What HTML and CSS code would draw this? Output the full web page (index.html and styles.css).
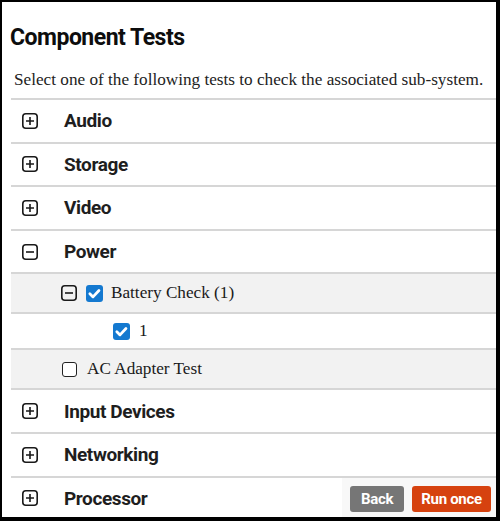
FILE: index.html
```html
<!DOCTYPE html>
<html>
<head>
<meta charset="utf-8">
<link rel="stylesheet" href="styles.css">
</head>
<body>
<div class="frame">
  <h1 class="title">Component Tests</h1>
  <p class="intro">Select one of the following tests to check the associated sub-system.</p>
  <ul class="list">
    <li class="row"><svg class="tog" viewBox="0 0 16 16"><rect x="0.8" y="0.8" width="14.4" height="14.4" rx="3"/><path d="M4 8h8M8 4v8"/></svg><span class="cat">Audio</span></li>
    <li class="row"><svg class="tog" viewBox="0 0 16 16"><rect x="0.8" y="0.8" width="14.4" height="14.4" rx="3"/><path d="M4 8h8M8 4v8"/></svg><span class="cat">Storage</span></li>
    <li class="row"><svg class="tog" viewBox="0 0 16 16"><rect x="0.8" y="0.8" width="14.4" height="14.4" rx="3"/><path d="M4 8h8M8 4v8"/></svg><span class="cat">Video</span></li>
    <li class="row"><svg class="tog" viewBox="0 0 16 16"><rect x="0.8" y="0.8" width="14.4" height="14.4" rx="3"/><path d="M4 8h8"/></svg><span class="cat">Power</span></li>
    <li class="row sub grey"><svg class="tog" viewBox="0 0 16 16"><rect x="0.8" y="0.8" width="14.4" height="14.4" rx="3"/><path d="M4 8h8"/></svg><span class="check on"><svg viewBox="0 0 16 16"><path d="M3.6 8.2l3 3 5.6-6"/></svg></span><span class="test">Battery Check (1)</span></li>
    <li class="row subsub"><span class="check on"><svg viewBox="0 0 16 16"><path d="M3.6 8.2l3 3 5.6-6"/></svg></span><span class="test">1</span></li>
    <li class="row sub grey ac"><span class="check off"></span><span class="test">AC Adapter Test</span></li>
    <li class="row"><svg class="tog" viewBox="0 0 16 16"><rect x="0.8" y="0.8" width="14.4" height="14.4" rx="3"/><path d="M4 8h8M8 4v8"/></svg><span class="cat">Input Devices</span></li>
    <li class="row"><svg class="tog" viewBox="0 0 16 16"><rect x="0.8" y="0.8" width="14.4" height="14.4" rx="3"/><path d="M4 8h8M8 4v8"/></svg><span class="cat">Networking</span></li>
    <li class="row"><svg class="tog" viewBox="0 0 16 16"><rect x="0.8" y="0.8" width="14.4" height="14.4" rx="3"/><path d="M4 8h8M8 4v8"/></svg><span class="cat">Processor</span></li>
  </ul>
  <div class="actions">
    <button class="btn back">Back</button>
    <button class="btn run">Run once</button>
  </div>
</div>
</body>
</html>
```
FILE: styles.css
```css
html, body {
  margin: 0;
  padding: 0;
  background: #fff;
}
.frame {
  position: relative;
  box-sizing: border-box;
  width: 500px;
  height: 521px;
  border-style: solid;
  border-color: #000;
  border-width: 2px 4px 4px 2px;
  background: #fff;
  overflow: hidden;
  font-family: "Roboto", "Liberation Sans", sans-serif;
  color: #1a1a1a;
}
.title {
  margin: 0;
  padding: 22px 0 0 8px;
  font-size: 23px;
  line-height: 28px;
  font-weight: 700;
  letter-spacing: -0.5px;
  color: #0d0d0d;
}
.intro {
  margin: 0;
  padding: 18px 0 0 12px;
  font-family: "Liberation Serif", "Times New Roman", serif;
  font-size: 17.2px;
  line-height: 20px;
  color: #222;
}
.list {
  list-style: none;
  margin: 8px 0 0 9px;
  padding: 0;
}
.row {
  display: flex;
  align-items: center;
  box-sizing: border-box;
  height: 43.6px;
  border-top: 2px solid #d6d6d6;
  padding-left: 11px;
}
.tog {
  width: 16px;
  height: 16px;
  flex: none;
  fill: none;
  stroke: #1a1a1a;
  stroke-width: 1.6;
}
.cat {
  margin-left: 26px;
  font-size: 19px;
  font-weight: 700;
  letter-spacing: -0.4px;
  color: #1e1e1e;
}
.grey {
  background: #f2f2f2;
}
.sub {
  height: 40px;
  padding-left: 50px;
}
.subsub {
  height: 36px;
  padding-left: 102px;
}
.ac {
  padding-left: 51px;
}
.check {
  box-sizing: border-box;
  width: 17px;
  height: 17px;
  border-radius: 3px;
  flex: none;
  display: flex;
}
.sub .tog + .check {
  margin-left: 9px;
}
.check.on {
  background: #1479d0;
}
.check.on svg {
  width: 17px;
  height: 17px;
  fill: none;
  stroke: #fff;
  stroke-width: 2.6;
  stroke-linecap: round;
  stroke-linejoin: round;
}
.check.off {
  width: 15px;
  height: 15px;
  border: 1.5px solid #222;
  background: #fff;
}
.test {
  margin-left: 8px;
  font-family: "Liberation Serif", "Times New Roman", serif;
  font-size: 17.2px;
  color: #1a1a1a;
}
.subsub .test {
  margin-left: 9px;
}
.ac .test {
  margin-left: 10px;
}
.actions {
  position: absolute;
  right: 0;
  bottom: 0;
  display: flex;
  gap: 8px;
  padding: 8px 5px 5px 8px;
  background: #f8f8f8;
}
.btn {
  border: none;
  border-radius: 3px;
  height: 26px;
  padding: 0;
  font-family: "Roboto", "Liberation Sans", sans-serif;
  font-size: 15px;
  font-weight: 700;
  letter-spacing: -0.3px;
  color: #fff;
}
.back {
  width: 54px;
  background: #767676;
}
.run {
  width: 79px;
  background: #d6420f;
}
```
